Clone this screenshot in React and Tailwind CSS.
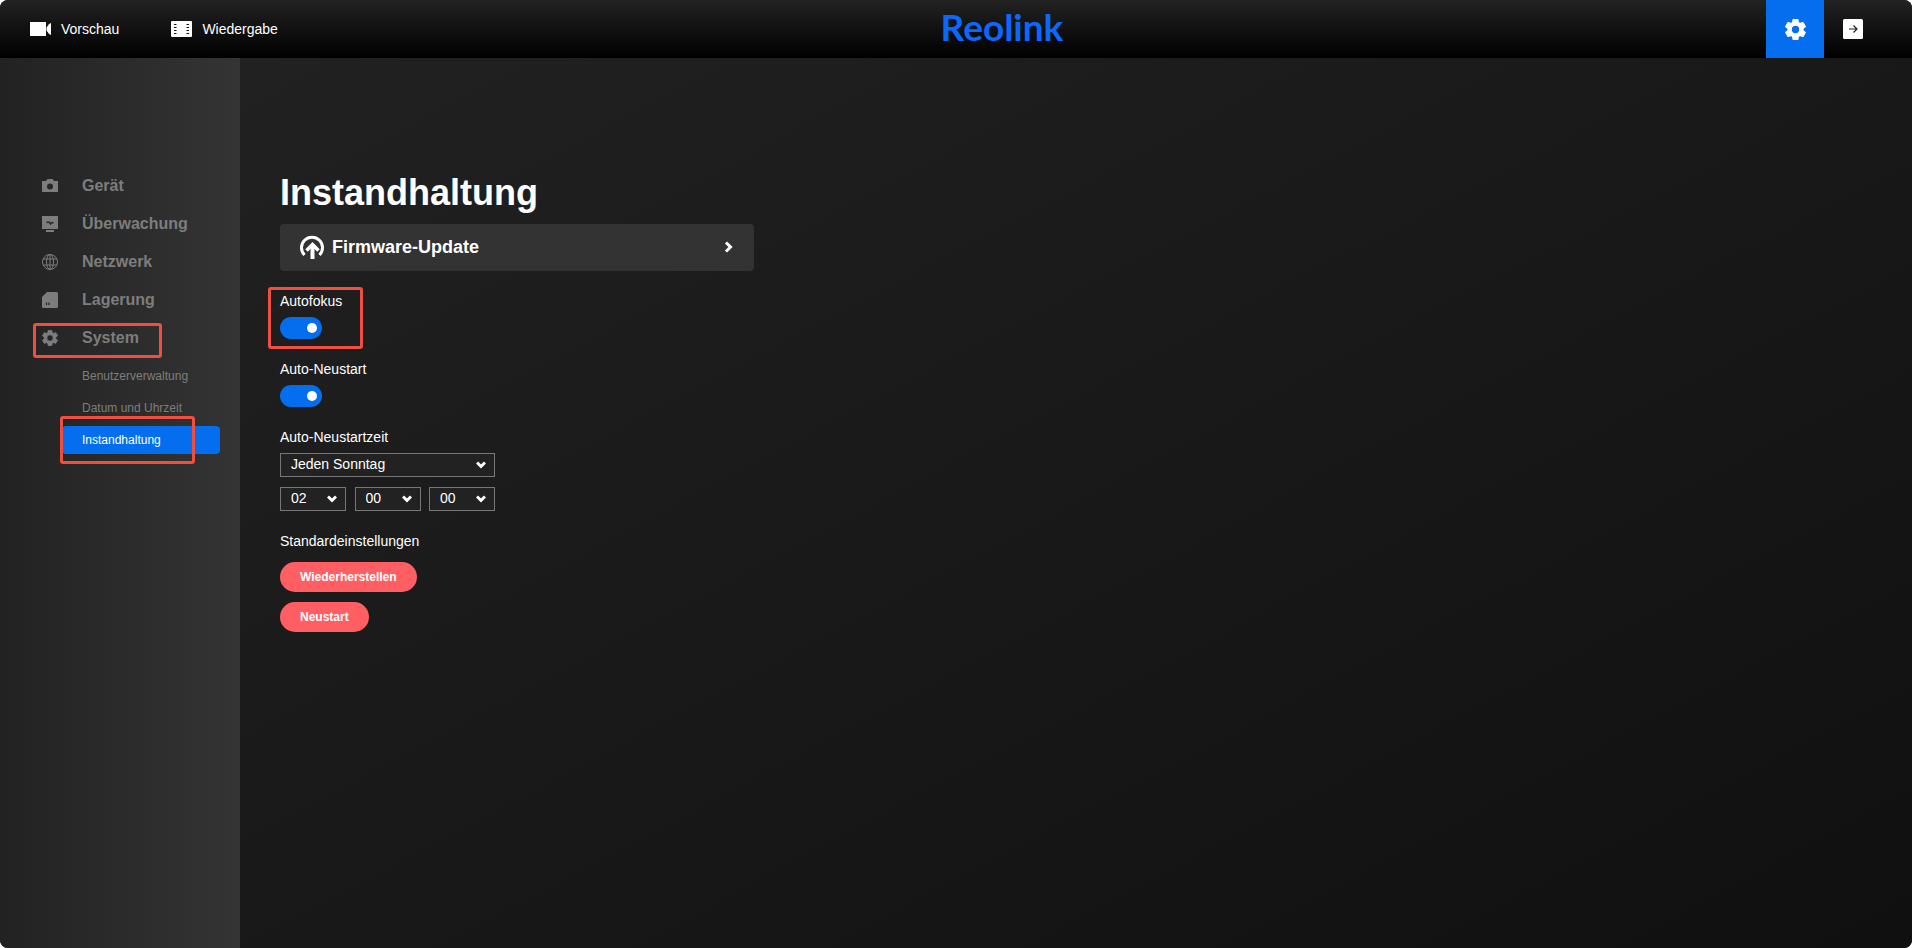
import React, { useState } from "react";

const GEAR_PATH =
  "M19.14 12.94c.04-.3.06-.61.06-.94 0-.32-.02-.64-.07-.94l2.03-1.58c.18-.14.23-.41.12-.61l-1.92-3.32c-.12-.22-.37-.29-.59-.22l-2.39.96c-.5-.38-1.03-.7-1.62-.94l-.36-2.54c-.04-.24-.24-.41-.48-.41h-3.84c-.24 0-.43.17-.47.41l-.36 2.54c-.59.24-1.13.57-1.62.94l-2.39-.96c-.22-.08-.47 0-.59.22L2.74 8.87c-.12.21-.08.47.12.61l2.03 1.58c-.05.3-.09.63-.09.94s.02.64.07.94l-2.03 1.58c-.18.14-.23.41-.12.61l1.92 3.32c.12.22.37.29.59.22l2.39-.96c.5.38 1.03.7 1.62.94l.36 2.54c.05.24.24.41.48.41h3.84c.24 0 .44-.17.47-.41l.36-2.54c.59-.24 1.13-.56 1.62-.94l2.39.96c.22.08.47 0 .59-.22l1.92-3.32c.12-.22.07-.47-.12-.61l-2.01-1.58zM12 16A4 4 0 1 1 12 8a4 4 0 0 1 0 8z";

const GearIcon = ({ className }) => (
  <svg viewBox="2 2 20 20" className={className} fill="currentColor" stroke="currentColor" strokeWidth="1" strokeLinejoin="round" aria-hidden="true">
    <path d={GEAR_PATH} />
  </svg>
);

const VideoIcon = () => (
  <svg viewBox="0 0 21 14" className="h-3.5 w-[21px]" fill="currentColor" aria-hidden="true">
    <path d="M0 0h16v14H0zM21 1v12l-2-1-2.500-3.500v-3L19 2z" />
  </svg>
);

const FilmIcon = () => (
  <svg viewBox="0 0 21 16" className="h-4 w-[21px]" aria-hidden="true">
    <rect width="21" height="16" rx="1" fill="currentColor" />
    <path d="M3 3.500h2.500M3 6.500h2.500M3 9.500h2.500M3 12.500h2.500M15.500 3.500H18M15.500 6.500H18M15.500 9.500H18M15.500 12.500H18" stroke="#111" strokeWidth="1.200" />
  </svg>
);

const LogoutIcon = () => (
  <svg viewBox="0 0 20 20" className="size-5" fill="none" aria-hidden="true">
    <rect width="20" height="20" rx="1.500" fill="#fff" />
    <path d="M6 10h8M10.500 6.500 14 10l-3.500 3.500" stroke="#222" strokeWidth="1.200" />
  </svg>
);

const CameraIcon = () => (
  <svg viewBox="0 0 16 16" className="size-4" fill="currentColor" fillRule="evenodd" aria-hidden="true">
    <path d="M0 3h4l1.500-2h5L12 3h4v11H0zM8 5.500a3 3 0 1 0 0 6 3 3 0 0 0 0-6z" />
  </svg>
);

const MonitorIcon = () => (
  <svg viewBox="0 0 16 16" className="size-4" aria-hidden="true">
    <path d="M0 0h16v13H0zM4 14h8v2H4z" fill="currentColor" />
    <path d="M4.500 6.500 7 6l1.500 2 1-1.500 2 .5" fill="none" stroke="#282828" strokeWidth="1.500" />
  </svg>
);

const GlobeIcon = () => (
  <svg viewBox="0 0 16 16" className="size-4" fill="none" stroke="currentColor" aria-hidden="true">
    <circle cx="8" cy="8" r="7.500" />
    <ellipse cx="8" cy="8" rx="3.500" ry="7.500" />
    <path d="M8 .5v15M1.500 5h13M1.500 11h13" />
  </svg>
);

const StorageIcon = () => (
  <svg viewBox="0 0 16 16" className="size-4" aria-hidden="true">
    <path d="M5 0h9.500A1.500 1.500 0 0 1 16 1.500v13a1.500 1.500 0 0 1-1.500 1.500h-13A1.500 1.500 0 0 1 0 14.500V5z" fill="currentColor" />
    <path d="M4.500 10.500v2.500M7 10.500v2.500" stroke="#282828" strokeWidth="1.300" />
  </svg>
);

const UpdateIcon = () => (
  <svg viewBox="0 0 24 24" className="size-6" fill="none" stroke="currentColor" strokeWidth="3" aria-hidden="true">
    <path d="M4.500 20a10.500 10.500 0 1 1 15 0" />
    <path d="M12.500 24V11" strokeWidth="4" />
    <path d="M6.500 15.500l6-6 6 6" strokeWidth="3.500" />
  </svg>
);

const menu = [
  { label: "Gerät", icon: <CameraIcon /> },
  { label: "Überwachung", icon: <MonitorIcon /> },
  { label: "Netzwerk", icon: <GlobeIcon /> },
  { label: "Lagerung", icon: <StorageIcon /> },
  { label: "System", icon: <GearIcon className="size-4" />, marked: true },
];

const subMenu = ["Benutzerverwaltung", "Datum und Uhrzeit", "Instandhaltung"];

// Red frame that highlights an area of the page
const Marker = ({ className }) => (
  <span className={`pointer-events-none absolute rounded-[3px] border-3 border-[#f04e3e] ${className}`} />
);

const Toggle = ({ id, checked, onChange }) => (
  <span className="relative mt-1.5 block h-[22px] w-[42px]">
    <input
      id={id}
      type="checkbox"
      checked={checked}
      onChange={(e) => onChange(e.target.checked)}
      className="peer block h-full w-full cursor-pointer appearance-none rounded-full bg-[#666] checked:bg-[#046eef]"
    />
    <span className="pointer-events-none absolute top-1.5 left-[5px] size-2.5 rounded-full bg-white peer-checked:right-[5px] peer-checked:left-auto" />
  </span>
);

const Select = ({ label, options, className }) => (
  <span className={`relative block ${className}`}>
    <select
      aria-label={label}
      className="block h-6 w-full appearance-none border border-[#767676] bg-[#222] pr-6 pb-0.5 pl-2.5 text-sm leading-5 text-white"
    >
      {options.map((option) => (
        <option key={option}>{option}</option>
      ))}
    </select>
    <svg viewBox="0 0 10 8" className="pointer-events-none absolute top-2 right-[9px] h-2 w-2.5" fill="none" stroke="#fff" strokeWidth="3" aria-hidden="true">
      <path d="M1 1.500l4 4 4-4" />
    </svg>
  </span>
);

const Header = () => (
  <header className="grid h-[58px] grid-cols-[1fr_auto_1fr] items-center bg-linear-to-b/srgb from-[#222] to-black">
    <nav className="flex items-center gap-[52px] pl-[30px] text-sm">
      <a href="#vorschau" className="flex items-center gap-2.5">
        <VideoIcon />
        Vorschau
      </a>
      <a href="#wiedergabe" className="flex items-center gap-2.5">
        <FilmIcon />
        Wiedergabe
      </a>
    </nav>
    <a href="#home" className="pb-1 pl-[92px] font-[Lato,sans-serif] text-[37px] leading-10 font-bold text-[#0b68ff]">
      Reolink
    </a>
    <div className="flex justify-end pr-[30px]">
      <button type="button" aria-label="Einstellungen" className="flex size-[58px] items-center justify-center bg-[#046eef]">
        <GearIcon className="size-[21px]" />
      </button>
      <button type="button" aria-label="Abmelden" className="flex size-[58px] items-center justify-center">
        <LogoutIcon />
      </button>
    </div>
  </header>
);

const Sidebar = () => (
  <aside className="w-60 shrink-0 bg-linear-to-r/srgb from-[#222] to-[#343434] pt-[109px] text-[#7d7d7d]">
    <ul>
      {menu.map((item) => (
        <li key={item.label} className="relative">
          <a href={`#${item.label}`} className="flex h-[38px] items-center gap-6 pl-[42px] font-bold">
            {item.icon}
            {item.label}
          </a>
          {item.marked && <Marker className="top-1 left-[33px] h-[35px] w-[129px]" />}
        </li>
      ))}
    </ul>
    <ul className="pt-[3px] text-xs">
      {subMenu.map((label) => (
        <li key={label} className="relative flex h-8 items-center pr-5 pl-[62px]">
          <a
            href={`#${label}`}
            className={`flex h-7 flex-1 items-center rounded-sm pl-5 ${
              label === "Instandhaltung" ? "bg-[#046eef] text-white" : ""
            }`}
          >
            {label}
          </a>
          {label === "Instandhaltung" && <Marker className="-top-2 left-[60px] h-12 w-[135px]" />}
        </li>
      ))}
    </ul>
  </aside>
);

const App = () => {
  const [autofocus, setAutofocus] = useState(true);
  const [autoRestart, setAutoRestart] = useState(true);

  return (
    <div className="bg-white font-['Liberation_Sans',Arial,sans-serif] text-white">
      <div className="flex min-h-screen flex-col overflow-hidden rounded-lg bg-[#1c1c1c]">
        <Header />
        <div className="flex flex-1">
          <Sidebar />
          <main className="flex-1 bg-linear-to-br/srgb from-[#212121] to-[#101010] px-10 pt-[115px] text-sm">
            <h1 className="text-4xl leading-10 font-bold">Instandhaltung</h1>
            <button
              type="button"
              className="mt-[11px] flex h-[47px] w-full max-w-[474px] items-center gap-2 rounded-sm bg-[#333] px-5 pb-0.5 text-lg font-bold"
            >
              <UpdateIcon />
              Firmware-Update
              <svg viewBox="0 0 10 12" className="ml-auto h-3 w-2.5" fill="none" stroke="currentColor" strokeWidth="3" aria-hidden="true">
                <path d="M2 1.500 6.500 6 2 10.500" />
              </svg>
            </button>

            <div className="relative mt-5">
              <label htmlFor="autofocus" className="block">Autofokus</label>
              <Toggle id="autofocus" checked={autofocus} onChange={setAutofocus} />
              <Marker className="-top-1 -left-3 h-[62px] w-[95px]" />
            </div>

            <div className="mt-5">
              <label htmlFor="autoRestart" className="block">Auto-Neustart</label>
              <Toggle id="autoRestart" checked={autoRestart} onChange={setAutoRestart} />
            </div>

            <div className="mt-5 w-[215px]">
              <p>Auto-Neustartzeit</p>
              <Select label="Tag" options={["Jeden Sonntag", "Jeden Montag"]} className="mt-1.5" />
              <div className="mt-2.5 flex justify-between">
                <Select label="Stunde" options={["02", "03"]} className="w-[66px]" />
                <Select label="Minute" options={["00", "30"]} className="w-[66px]" />
                <Select label="Sekunde" options={["00", "30"]} className="w-[66px]" />
              </div>
            </div>

            <div className="mt-5 flex flex-col items-start gap-2.5">
              <p className="pb-px">Standardeinstellungen</p>
              <button type="button" className="h-[30px] rounded-full bg-[#ff5f62] px-5 text-xs font-bold">
                Wiederherstellen
              </button>
              <button type="button" className="h-[30px] rounded-full bg-[#ff5f62] px-5 text-xs font-bold">
                Neustart
              </button>
            </div>
          </main>
        </div>
      </div>
    </div>
  );
};

export default App;
